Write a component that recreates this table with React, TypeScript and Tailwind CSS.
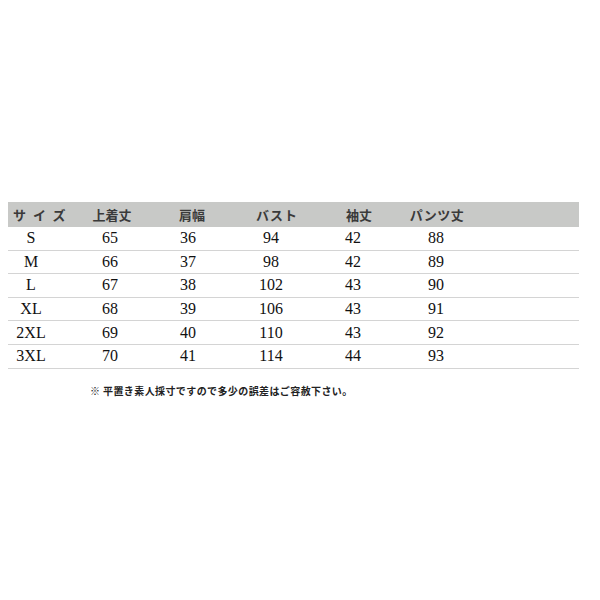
import React from "react";

const rows = [
  ["S", "65", "36", "94", "42", "88"],
  ["M", "66", "37", "98", "42", "89"],
  ["L", "67", "38", "102", "43", "90"],
  ["XL", "68", "39", "106", "43", "91"],
  ["2XL", "69", "40", "110", "43", "92"],
  ["3XL", "70", "41", "114", "44", "93"],
];

const jp = { fontFamily: '"Noto Sans CJK JP", "Noto Sans", sans-serif' };
const serif = { fontFamily: '"Liberation Serif", "DejaVu Serif", serif' };

export default function App() {
  return (
    <div className="w-[600px] h-[600px] bg-white relative">
      <div className="pt-[202px] pl-[8px]">
        <div className="w-[571px]">
          <div
            className="flex h-[25px] items-center bg-[#c8c9c7] text-[13px] font-bold text-[#3a3a3a] leading-none"
            style={jp}
          >
            <div className="w-[46px] shrink-0 pl-[5px] whitespace-nowrap tracking-[7px]">サイズ</div>
            <div className="w-[112px] shrink-0 text-center pl-[4px]">上着丈</div>
            <div className="w-[44px] shrink-0 text-center pl-[8px] whitespace-nowrap">肩幅</div>
            <div className="w-[122px] shrink-0 text-center pl-[12px] whitespace-nowrap tracking-[1px]">バスト</div>
            <div className="w-[42px] shrink-0 text-center pl-[12px] whitespace-nowrap">袖丈</div>
            <div className="w-[124px] shrink-0 text-center pl-[2px] whitespace-nowrap tracking-[0.5px]">パンツ丈</div>
          </div>
          {rows.map((r) => (
            <div
              key={r[0]}
              className="flex h-[23.6px] items-center border-b-[1.5px] border-[#d4d4d4] text-[16px] text-[#111] leading-none"
              style={serif}
            >
              <div className="w-[46px] shrink-0 text-center">{r[0]}</div>
              <div className="w-[112px] shrink-0 text-center">{r[1]}</div>
              <div className="w-[44px] shrink-0 text-center">{r[2]}</div>
              <div className="w-[122px] shrink-0 text-center">{r[3]}</div>
              <div className="w-[42px] shrink-0 text-center">{r[4]}</div>
              <div className="w-[124px] shrink-0 text-center">{r[5]}</div>
            </div>
          ))}
        </div>
        <div
          className="mt-[17px] ml-[82px] text-[10px] font-bold text-[#222] tracking-[0.4px] whitespace-nowrap leading-none"
          style={jp}
        >
          ※ 平置き素人採寸ですので多少の誤差はご容赦下さい。
        </div>
      </div>
    </div>
  );
}
